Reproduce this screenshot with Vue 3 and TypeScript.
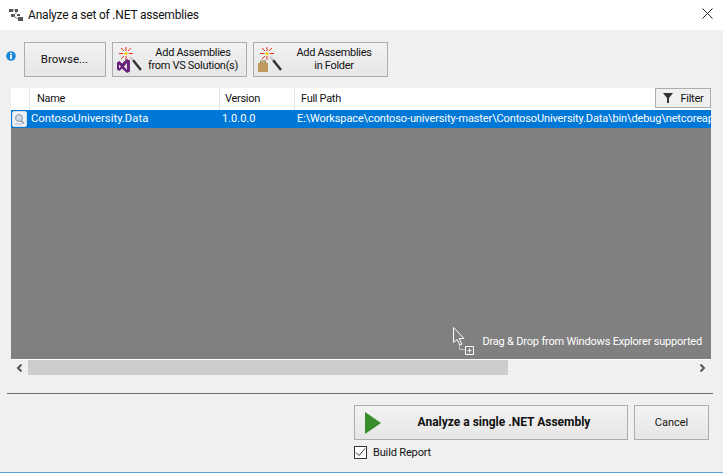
<script setup lang="ts">
const columns = [
  { name: 'Name', width: 190 },
  { name: 'Version', width: 75 },
  { name: 'Full Path', width: 416 },
]
</script>

<template>
  <div class="window">
    <header class="titlebar">
      <svg class="app-icon" width="16" height="14" viewBox="0 0 16 14">
        <path d="M1 1h4v3H1zM7 1h3v3H7zM3 6h4v3H3zM9 6h3v2H9zM10 9h5v4h-5z" fill="#555" />
        <path d="M5 2h2M5 8l5 3M8 4v2" stroke="#888" fill="none" />
      </svg>
      <span class="title">Analyze a set of .NET assemblies</span>
      <svg class="close" width="11" height="11" viewBox="0 0 11 11">
        <path d="M.5.5l10 10M10.500.5l-10 10" stroke="#222" fill="none" />
      </svg>
    </header>

    <main class="body">
      <div class="toolbar">
        <svg class="info" width="10" height="10" viewBox="0 0 10 10">
          <circle cx="5" cy="5" r="4.800" fill="#1c87d8" />
          <rect x="4.200" y="4" width="1.700" height="4" fill="#fff" />
          <rect x="4.200" y="1.800" width="1.700" height="1.500" fill="#fff" />
        </svg>
        <button class="btn browse">Browse...</button>
        <button class="btn icon-btn vs">
          <svg width="32" height="29" viewBox="0 0 32 29">
            <g stroke="#e8341c" stroke-width="1" fill="none">
              <path d="M10 2v4M10 11v4M3 8.500h4M13 8.500h4M5 3l3 3M15 3l-3 3M5 14l3-3" />
            </g>
            <path d="M7 8.500h6" stroke="#f0a0a0" />
            <circle cx="10" cy="8.500" r="1.500" fill="#f5d800" />
            <path d="M17 15l8 10" stroke="#333" stroke-width="2.500" />
            <path d="M14 12l3 3" stroke="#ccc" stroke-width="2.500" />
            <path d="M1 17.500l2.500-1.500 2.500 2.500 5-4.500 3 1.500v11l-3 1.500-5-4.500-2.500 2.500-2.500-1.500zM3 19.500v4l2-2zM11 18l-3 3.500 3 3.500z" fill="#68217a" fill-rule="evenodd" />
          </svg>
          <span class="label">Add Assemblies<br />from VS Solution(s)</span>
        </button>
        <button class="btn icon-btn folder">
          <svg width="32" height="29" viewBox="0 0 32 29">
            <g stroke="#e8341c" stroke-width="1" fill="none">
              <path d="M10 2v4M10 11v4M3 8.500h4M13 8.500h4M5 3l3 3M15 3l-3 3M5 14l3-3" />
            </g>
            <path d="M7 8.500h6" stroke="#f0a0a0" />
            <circle cx="10" cy="8.500" r="1.500" fill="#f5d800" />
            <path d="M16 15l8 10" stroke="#333" stroke-width="2.500" />
            <path d="M13 12l3 3" stroke="#ccc" stroke-width="2.500" />
            <path d="M3.500 16h5v2h-5z" fill="none" stroke="#8d6d38" stroke-width="1" />
            <path d="M1 18h10v9H1z" fill="#c09a5c" />
          </svg>
          <span class="label">Add Assemblies<br />in Folder</span>
        </button>
      </div>

      <section class="grid">
        <div class="grid-head">
          <div class="head-spacer"></div>
          <div v-for="c in columns" :key="c.name" class="head-cell" :style="{ width: c.width + 'px' }">{{ c.name }}</div>
          <button class="filter">
            <svg width="10" height="10" viewBox="0 0 10 10"><path d="M0 0h10L6 5v5H4V5z" fill="#333" /></svg>
            Filter
          </button>
        </div>
        <div class="grid-body">
          <div class="row">
            <div class="row-icon">
              <svg width="15" height="16" viewBox="0 0 15 16">
                <rect x=".5" y=".5" width="14" height="15" rx="1.500" fill="#eef1f5" stroke="#d5dbe3" />
                <circle cx="7" cy="7" r="3.500" fill="#cdd8e4" stroke="#8a98a9" />
                <path d="M9 9.500l3 3" stroke="#8a98a9" stroke-width="1.500" />
                <path d="M3 13h7" stroke="#aab6c4" />
              </svg>
            </div>
            <div class="cell name">ContosoUniversity.Data</div>
            <div class="cell version">1.0.0.0</div>
            <div class="cell path">E:\Workspace\contoso-university-master\ContosoUniversity.Data\bin\debug\netcoreapp2.0\ContosoUniversity.Data.dll</div>
          </div>
          <div class="hint">
            <svg width="22" height="28" viewBox="0 0 22 28">
              <path d="M.5.5v15l3.500-3 3 5.500 2-1-3-5.500h5z" fill="#808080" stroke="#fff" />
              <path d="M6.500 17.500v5h6" fill="none" stroke="#fff" stroke-dasharray="1 1" />
              <path d="M12.500 19.500h8v8h-8z" fill="#808080" stroke="#fff" />
              <path d="M14.500 23.500h4M16.500 21.500v4" stroke="#fff" />
            </svg>
            <span>Drag &amp; Drop from Windows Explorer supported</span>
          </div>
        </div>
        <div class="scrollbar">
          <svg class="arrow" width="8" height="8" viewBox="0 0 8 8"><path d="M6 0.500L2.500 4 6 7.500" fill="none" stroke="#555" stroke-width="2" /></svg>
          <div class="track"><div class="thumb"></div></div>
          <svg class="arrow" width="8" height="8" viewBox="0 0 8 8"><path d="M2 0.500L5.500 4 2 7.500" fill="none" stroke="#555" stroke-width="2" /></svg>
        </div>
      </section>

      <hr class="separator" />

      <div class="actions">
        <div class="analyze-col">
          <button class="btn analyze">
            <svg width="16" height="22" viewBox="0 0 16 22"><path d="M0 0l16 11L0 22z" fill="#3a8a2e" /></svg>
            <span>Analyze a single .NET Assembly</span>
          </button>
          <label class="check">
            <span class="box">
              <svg width="11" height="9" viewBox="0 0 11 9"><path d="M1 4.500l3 3 6-7" fill="none" stroke="#333" /></svg>
            </span>
            <span class="check-label">Build Report</span>
          </label>
        </div>
        <button class="btn cancel">Cancel</button>
      </div>
    </main>
  </div>
</template>

<style>
html, body { margin: 0; background: #f0f0f0; }
</style>

<style scoped>
.window {
  width: 723px;
  height: 473px;
  box-sizing: border-box;
  display: flex;
  flex-direction: column;
  font-family: Roboto, "Liberation Sans", sans-serif;
  font-size: 11px;
  color: #111;
  overflow: hidden;
  border-bottom: 1px solid #5aa0e0;
  background: #f0f0f0;
}
.titlebar {
  height: 29px;
  flex: none;
  background: #fff;
  display: flex;
  align-items: center;
  padding: 0 10px 1px 8px;
  font-size: 12px;
  letter-spacing: -0.2px;
}
.title { margin-left: 4px; flex: 1; }
.close { margin-bottom: 2px; }
.body {
  flex: 1;
  display: flex;
  flex-direction: column;
  min-height: 0;
}
.toolbar {
  display: flex;
  align-items: center;
  padding: 12px 0 0 6px;
  height: 35px;
}
.info { margin-right: 8px; margin-bottom: 7px; }
.btn {
  box-sizing: border-box;
  border: 1px solid #adadad;
  background: linear-gradient(#f2f2f2, #e6e6e6);
  font: inherit;
  color: inherit;
  padding: 0;
  height: 35px;
}
.browse { width: 82px; margin-right: 6px; padding: 0 1px 2px 0; font-size: 11.500px; }
.icon-btn {
  width: 135px;
  margin-right: 6px;
  display: flex;
  align-items: center;
  padding-left: 3px;
}
.icon-btn .label {
  flex: 1;
  text-align: center;
  line-height: 13px;
  padding-right: 8px;
  padding-bottom: 1px;
  white-space: nowrap;
  letter-spacing: -0.3px;
}
.grid {
  margin: 11px 12px 0 11px;
  display: flex;
  flex-direction: column;
}
.grid-head {
  height: 22px;
  background: #fff;
  display: flex;
  position: relative;
}
.head-spacer { width: 18px; border-right: 1px solid #e5e5e5; }
.head-cell {
  box-sizing: border-box;
  border-right: 1px solid #e5e5e5;
  padding: 4px 0 0 7px;
  white-space: nowrap;
  letter-spacing: -0.3px;
}
.head-cell:nth-child(3) { padding-left: 5px; }
.head-cell:nth-child(4) { border-right: none; padding-left: 6px; }
.filter {
  position: absolute;
  right: 0;
  top: 0;
  box-sizing: border-box;
  width: 56px;
  height: 20px;
  border: 1px solid #adadad;
  background: #f0f0f0;
  font: inherit;
  color: inherit;
  letter-spacing: -0.3px;
  padding: 0;
  display: flex;
  align-items: center;
  justify-content: center;
  gap: 8px;
}
.grid-body {
  height: 249px;
  background: #808080;
  position: relative;
  border-bottom: 1px solid #fff;
}
.row {
  height: 18px;
  background: #0078d7;
  color: #fff;
  display: flex;
  align-items: center;
  white-space: nowrap;
  overflow: hidden;
  line-height: 16px;
}
.row-icon { width: 20px; display: flex; align-items: center; padding-left: 1px; box-sizing: border-box; }
.cell { flex: none; padding-bottom: 1px; }
.name { width: 191px; font-size: 11.300px; }
.version { width: 75px; }
.path { width: 414px; overflow: hidden; letter-spacing: -0.12px; }
.hint {
  position: absolute;
  right: 9px;
  bottom: 4px;
  display: flex;
  align-items: flex-start;
  gap: 7px;
  color: #fff;
  white-space: nowrap;
  letter-spacing: -0.19px;
}
.hint span { margin-top: 8px; }
.scrollbar {
  height: 15px;
  display: flex;
  align-items: center;
}
.arrow { width: 17px; flex: none; }
.track { flex: 1; height: 15px; }
.thumb { width: 480px; height: 15px; background: #cdcdcd; }
.separator {
  margin: 18px 10px 0 7px;
  border: none;
  height: 1px;
  background: #696969;
}
.actions {
  display: flex;
  justify-content: flex-end;
  align-items: flex-start;
  gap: 6px;
  padding: 11px 14px 0 0;
}
.analyze-col { display: flex; flex-direction: column; gap: 6px; }
.analyze {
  width: 274px;
  display: flex;
  align-items: center;
  padding-left: 10px;
  font-weight: 700;
  font-size: 12px;
}
.analyze span { flex: 1; text-align: center; padding-bottom: 1px; }
.cancel { width: 75px; padding-bottom: 1px; }
.check { display: flex; align-items: center; gap: 6px; line-height: 13px; }
.check-label { letter-spacing: -0.15px; }
.box {
  box-sizing: border-box;
  width: 13px;
  height: 13px;
  border: 1px solid #333;
  background: #fff;
  display: flex;
  align-items: center;
  justify-content: center;
}
</style>
